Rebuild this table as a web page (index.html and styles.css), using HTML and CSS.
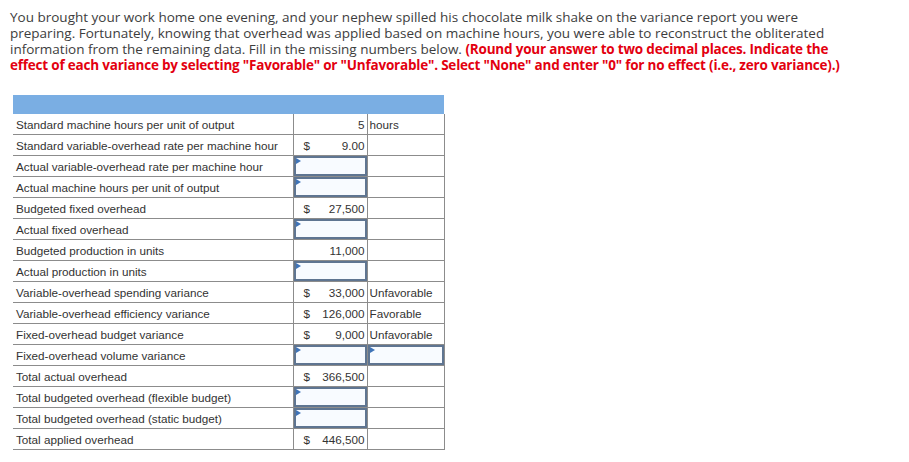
FILE: index.html
```html
<!DOCTYPE html>
<html>
<head>
<meta charset="utf-8">
<link rel="stylesheet" href="styles.css">
</head>
<body>
<div class="page">
  <p class="intro">You brought your work home one evening, and your nephew spilled his chocolate milk shake on the variance report you were preparing. Fortunately, knowing that overhead was applied based on machine hours, you were able to reconstruct the obliterated information from the remaining data. Fill in the missing numbers below. <strong class="note">(Round your answer to two decimal places. Indicate the effect of each variance by selecting "Favorable" or "Unfavorable". Select "None" and enter "0" for no effect (i.e., zero variance).)</strong></p>

  <table class="sheet">
    <colgroup>
      <col class="c-label">
      <col class="c-val">
      <col class="c-unit">
    </colgroup>
    <thead>
      <tr class="head"><th colspan="3"></th></tr>
    </thead>
    <tbody>
      <tr><td class="label">Standard machine hours per unit of output</td><td class="val"><span class="num">5</span></td><td class="unit">hours</td></tr>
      <tr><td class="label">Standard variable-overhead rate per machine hour</td><td class="val"><span class="cur">$</span><span class="num">9.00</span></td><td class="unit"></td></tr>
      <tr><td class="label">Actual variable-overhead rate per machine hour</td><td class="val input"></td><td class="unit"></td></tr>
      <tr><td class="label">Actual machine hours per unit of output</td><td class="val input"></td><td class="unit"></td></tr>
      <tr><td class="label">Budgeted fixed overhead</td><td class="val"><span class="cur">$</span><span class="num">27,500</span></td><td class="unit"></td></tr>
      <tr><td class="label">Actual fixed overhead</td><td class="val input"></td><td class="unit"></td></tr>
      <tr><td class="label">Budgeted production in units</td><td class="val"><span class="num">11,000</span></td><td class="unit"></td></tr>
      <tr><td class="label">Actual production in units</td><td class="val input"></td><td class="unit"></td></tr>
      <tr><td class="label">Variable-overhead spending variance</td><td class="val"><span class="cur">$</span><span class="num">33,000</span></td><td class="unit">Unfavorable</td></tr>
      <tr><td class="label">Variable-overhead efficiency variance</td><td class="val"><span class="cur">$</span><span class="num">126,000</span></td><td class="unit">Favorable</td></tr>
      <tr><td class="label">Fixed-overhead budget variance</td><td class="val"><span class="cur">$</span><span class="num">9,000</span></td><td class="unit">Unfavorable</td></tr>
      <tr><td class="label">Fixed-overhead volume variance</td><td class="val input"></td><td class="unit input"></td></tr>
      <tr><td class="label">Total actual overhead</td><td class="val"><span class="cur">$</span><span class="num">366,500</span></td><td class="unit"></td></tr>
      <tr><td class="label">Total budgeted overhead (flexible budget)</td><td class="val input"></td><td class="unit"></td></tr>
      <tr><td class="label">Total budgeted overhead (static budget)</td><td class="val input"></td><td class="unit"></td></tr>
      <tr><td class="label">Total applied overhead</td><td class="val"><span class="cur">$</span><span class="num">446,500</span></td><td class="unit"></td></tr>
    </tbody>
  </table>
</div>
</body>
</html>
```

FILE: styles.css
```css
html, body {
  margin: 0;
  padding: 0;
  background: #ffffff;
}

.page {
  padding: 9px 10px 0 10px;
}

.intro {
  margin: 0;
  width: 845px;
  font-family: "Open Sans", "Liberation Sans", sans-serif;
  font-size: 13.5px;
  line-height: 16px;
  color: #3d3d3d;
}

.note {
  color: #e3000f;
  font-weight: 700;
  letter-spacing: -0.2px;
}

.sheet {
  margin: 22px 0 0 3px;
  border-collapse: collapse;
  table-layout: fixed;
  width: 431px;
  font-family: "Liberation Sans", Arial, sans-serif;
  font-size: 11.7px;
  color: #333333;
}

.c-label { width: 280px; }
.c-val { width: 74px; }
.c-unit { width: 77px; }

.head th {
  height: 19px;
  padding: 0;
  background: #7aaee3;
  border: none;
}

.sheet td {
  height: 20px;
  padding: 0;
  border-bottom: 1px solid #8c8c8c;
  vertical-align: middle;
  white-space: nowrap;
}

.label {
  padding-left: 3px !important;
}

.val {
  border-left: 1px solid #8c8c8c;
  border-right: 1px solid #8c8c8c;
}

.val:not(.input) {
  padding: 0 2px 0 10px !important;
}

.val .cur {
  float: left;
}

.val .num {
  float: right;
}

.unit {
  border-right: 1px solid #8c8c8c;
  padding-left: 2px !important;
}

.input {
  position: relative;
  background: #f8fbff;
  box-shadow: inset 0 0 0 2px #5f7591;
}

.input::before {
  content: "";
  position: absolute;
  left: 2px;
  top: 2px;
  border-top: 3px solid transparent;
  border-bottom: 3px solid transparent;
  border-left: 5px solid #3f74b8;
}
```
